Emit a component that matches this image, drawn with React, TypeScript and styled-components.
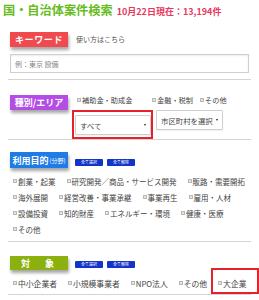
import styled, { createGlobalStyle } from "styled-components"

const GlobalStyle = createGlobalStyle`
    body {
        margin: 0;
        background: #fff;
        font-family: "Noto Sans CJK JP", "Noto Sans", sans-serif;
        color: #444;
    }
`

const purposes = [
    '創業・起業', '研究開発／商品・サービス開発', '販路・需要開拓',
    '海外展開', '経営改善・事業承継', '事業再生', '雇用・人材',
    '設備投資', '知的財産', 'エネルギー・環境', '健康・医療', 'その他'
]

const targets = ['中小企業者', '小規模事業者', 'NPO法人', 'その他', '大企業']

const kinds = ['補助金・助成金', '金融・税制', 'その他']

export default function App() {
    return (
        <Page>
            <GlobalStyle />
            <Header>
                <Title>国・自治体案件検索</Title>
                <Count>10月22日現在：13,194件</Count>
            </Header>

            <KeywordSection>
                <LabelRow>
                    <Label $bg="#f04a4f" $spacing="0.6px">キーワード</Label>
                    <HelpLink>使い方はこちら</HelpLink>
                </LabelRow>
                <KeywordInput placeholder="例：東京 設備" />
            </KeywordSection>

            <KindSection>
                <Label $bg="#b44de6">種別/エリア</Label>
                <KindRight>
                    <KindChecks>
                        {kinds.map((k) => (
                            <CheckItem key={k}><Box />{k}</CheckItem>
                        ))}
                    </KindChecks>
                    <Selects>
                        <Highlight>
                            <SelectBox $width={76}>すべて<Caret /></SelectBox>
                        </Highlight>
                        <SelectBox $width={67}>市区町村を選択<Caret /></SelectBox>
                    </Selects>
                </KindRight>
            </KindSection>

            <ListSection $top={12} $bottom={4}>
                <LabelRow>
                    <Label $bg="#1f7be6" $height={16}>利用目的<Small>(分野)</Small></Label>
                    <Buttons>
                        <MiniButton>全て選択</MiniButton>
                        <MiniButton>全て解除</MiniButton>
                    </Buttons>
                </LabelRow>
                <Checks $size={7.5}>
                    {purposes.map((p) => (
                        <CheckItem key={p}><Box />{p}</CheckItem>
                    ))}
                </Checks>
            </ListSection>

            <ListSection $top={14} $bottom={3}>
                <LabelRow>
                    <Label $bg="#8cb10f" $height={14} $spacing="3px">対　象</Label>
                    <Buttons>
                        <MiniButton>全て選択</MiniButton>
                        <MiniButton>全て解除</MiniButton>
                    </Buttons>
                </LabelRow>
                <Checks $size={7.8}>
                    {targets.map((t) => (
                        <CheckItem key={t} $marked={t === '大企業'}><Box />{t}</CheckItem>
                    ))}
                </Checks>
            </ListSection>
        </Page>
    )
}

const Page = styled.div`
    width: 259px;
    height: 300px;
    overflow: hidden;
    padding: 0 8px;
    box-sizing: border-box;
`

const Header = styled.div`
    display: flex;
    align-items: baseline;
    padding: 2px 0 0 0;
    margin-left: -5px;
    height: 20px;
`

const Title = styled.h1`
    margin: 0;
    font-size: 12.2px;
    line-height: 16px;
    font-weight: 700;
    color: #66bc22;
`

const Count = styled.span`
    margin-left: 4px;
    font-size: 9px;
    font-weight: 700;
    color: #e8385c;
`

const KeywordSection = styled.div`
    padding: 10px 0 6px;
    border-bottom: 1px solid #d4d4d4;
`

const LabelRow = styled.div`
    display: flex;
    align-items: flex-end;
    gap: 8px;
    padding-left: 2px;
`

const Label = styled.div<{ $bg: string; $height?: number; $spacing?: string }>`
    width: 58px;
    height: ${(p) => p.$height ?? 15}px;
    display: flex;
    align-items: center;
    justify-content: center;
    background: ${(p) => p.$bg};
    color: #fff;
    font-size: 9px;
    font-weight: 700;
    letter-spacing: ${(p) => p.$spacing ?? '0'};
    white-space: nowrap;
    box-shadow: 1px 3px 3px rgba(0, 0, 0, 0.35);
    flex-shrink: 0;
`

const Small = styled.span`
    font-size: 6px;
    font-weight: 400;
    margin-left: 1px;
`

const HelpLink = styled.span`
    font-size: 7px;
    color: #555;
    margin-bottom: 3px;
`

const KeywordInput = styled.input`
    display: block;
    margin: 7px 0 0 2px;
    width: 239px;
    height: 19px;
    box-sizing: border-box;
    border: 1px solid #cfcfcf;
    box-shadow: inset 0 1px 2px rgba(0, 0, 0, 0.08);
    padding: 0 4px;
    font-family: inherit;
    font-size: 7px;
    outline: none;

    &::placeholder {
        color: #888;
    }
`

const KindSection = styled.div`
    display: flex;
    align-items: flex-start;
    gap: 4px;
    padding: 15px 0 0 2px;
    height: 60px;
    box-sizing: border-box;
    border-bottom: 1px solid #d4d4d4;
`

const KindRight = styled.div`
    display: flex;
    flex-direction: column;
    margin-top: -3px;
`

const KindChecks = styled.div`
    display: grid;
    grid-template-columns: 75px 48px auto;
    padding-left: 5px;
    font-size: 7.2px;
`

const Selects = styled.div`
    display: flex;
    align-items: flex-start;
    gap: 3px;
    margin-top: 2px;
`

const Highlight = styled.div`
    border: 2px solid #e5222b;
    padding: 3px 0 2px 1px;
`

const SelectBox = styled.div<{ $width: number }>`
    width: ${(p) => p.$width}px;
    height: 20px;
    box-sizing: border-box;
    border: 1px solid #cfcfcf;
    border-radius: 1px;
    background: #fff;
    box-shadow: 0 1px 1px rgba(0, 0, 0, 0.06);
    display: flex;
    align-items: center;
    padding: 0 4px;
    font-size: 7.4px;
    color: #444;
`

const Caret = styled.span`
    margin-left: auto;
    width: 0;
    height: 0;
    border-left: 1.5px solid transparent;
    border-right: 1.5px solid transparent;
    border-top: 2px solid #222;
`

const ListSection = styled.div<{ $top: number; $bottom: number }>`
    padding: ${(p) => p.$top}px 0 ${(p) => p.$bottom}px;
    border-bottom: 1px solid #d4d4d4;
`

const Buttons = styled.div`
    display: flex;
    gap: 4px;
    margin: 0 0 2px -1px;
`

const MiniButton = styled.button`
    width: 28px;
    height: 7px;
    padding: 0;
    border: none;
    border-radius: 1px;
    background: #1234c8;
    color: #fff;
    font-family: inherit;
    font-size: 4px;
    line-height: 7px;
`

const Checks = styled.div<{ $size: number }>`
    display: flex;
    flex-wrap: wrap;
    column-gap: 11px;
    padding: 5px 0 0 5px;
    width: 240px;
    font-size: ${(p) => p.$size}px;
`

const CheckItem = styled.label<{ $marked?: boolean }>`
    position: relative;
    display: flex;
    align-items: center;
    height: 16px;
    font-size: inherit;
    color: #444;
    white-space: nowrap;

    ${(p) => p.$marked && `
        &::after {
            content: "";
            position: absolute;
            left: -7px;
            right: -12px;
            top: -7px;
            bottom: -3px;
            border: 2px solid #e5222b;
        }
    `}
`

const Box = styled.span`
    width: 4px;
    height: 4px;
    margin-right: 1px;
    box-sizing: border-box;
    border: 1px solid #b8b8b8;
    background: #e4e4e4;
    flex-shrink: 0;
`
